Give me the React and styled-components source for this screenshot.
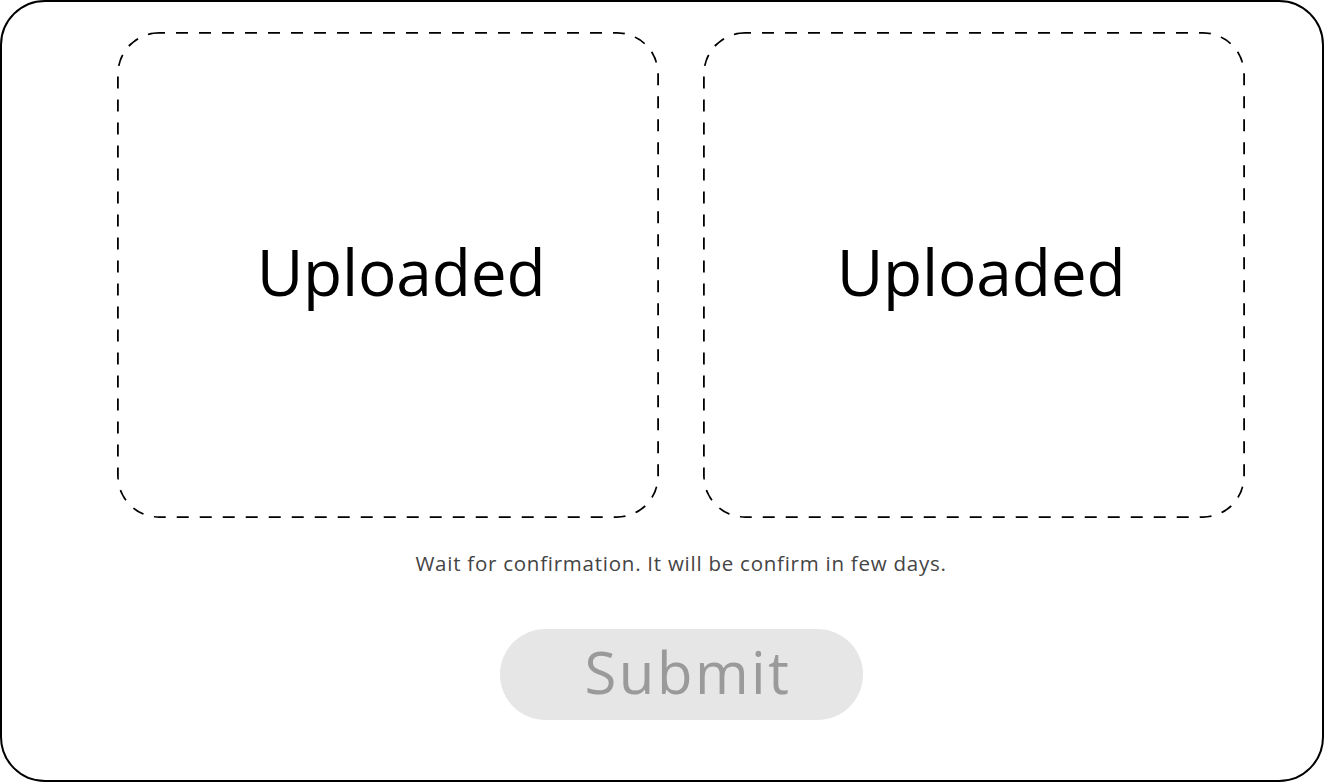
import React from "react";
import styled, { createGlobalStyle } from "styled-components";

const GlobalStyle = createGlobalStyle`
  * { box-sizing: border-box; }
  html, body { margin: 0; padding: 0; background: #ffffff; }
  body { font-family: "Open Sans", "Liberation Sans", sans-serif; }
`;

const dashedSvg = encodeURIComponent(
  "<svg xmlns='http://www.w3.org/2000/svg' width='100%' height='100%'><rect width='100%' height='100%' fill='none' rx='42' ry='42' stroke='black' stroke-width='3.6' stroke-dasharray='12 11' stroke-dashoffset='6'/></svg>"
);

const Frame = styled.div`
  width: 100vw;
  height: 100vh;
  border: 2px solid #000;
  border-radius: 45px;
  padding: 30px 0 0 115px;
  background: #fff;
`;

const Column = styled.div`
  width: 1128px;
  display: flex;
  flex-direction: column;
  align-items: center;
`;

const UploadGrid = styled.div`
  width: 100%;
  display: grid;
  grid-template-columns: 542px 542px;
  column-gap: 44px;
`;

const UploadBox = styled.div`
  height: 486px;
  border-radius: 42px;
  background-image: url("data:image/svg+xml,${dashedSvg}");
  display: flex;
  align-items: center;
  justify-content: center;
  padding-left: ${(p) => p.$shift}px;
  padding-bottom: 6px;
`;

const UploadLabel = styled.span`
  font-family: "Open Sans", "Liberation Sans", sans-serif;
  font-size: 64px;
  font-weight: 400;
  color: #000;
  line-height: 1;
  letter-spacing: -0.2px;
`;

const Notice = styled.p`
  margin: 30px 0 0;
  font-size: 20.5px;
  line-height: 30px;
  color: #444;
  letter-spacing: 0.75px;
`;

const SubmitButton = styled.button`
  margin-top: 51px;
  width: 363px;
  height: 91px;
  border: none;
  border-radius: 46px;
  background: #e6e6e6;
  color: #9a9a9a;
  font-family: "Open Sans", "Liberation Sans", sans-serif;
  font-size: 58px;
  line-height: 1;
  padding: 0 0 6px 14px;
  letter-spacing: 2.5px;
  cursor: not-allowed;
`;

export default function App() {
  return (
    <>
      <GlobalStyle />
      <Frame>
        <Column>
          <UploadGrid>
            <UploadBox $shift={26}>
              <UploadLabel>Uploaded</UploadLabel>
            </UploadBox>
            <UploadBox $shift={14}>
              <UploadLabel>Uploaded</UploadLabel>
            </UploadBox>
          </UploadGrid>
          <Notice>Wait for confirmation. It will be confirm in few days.</Notice>
          <SubmitButton disabled>Submit</SubmitButton>
        </Column>
      </Frame>
    </>
  );
}
